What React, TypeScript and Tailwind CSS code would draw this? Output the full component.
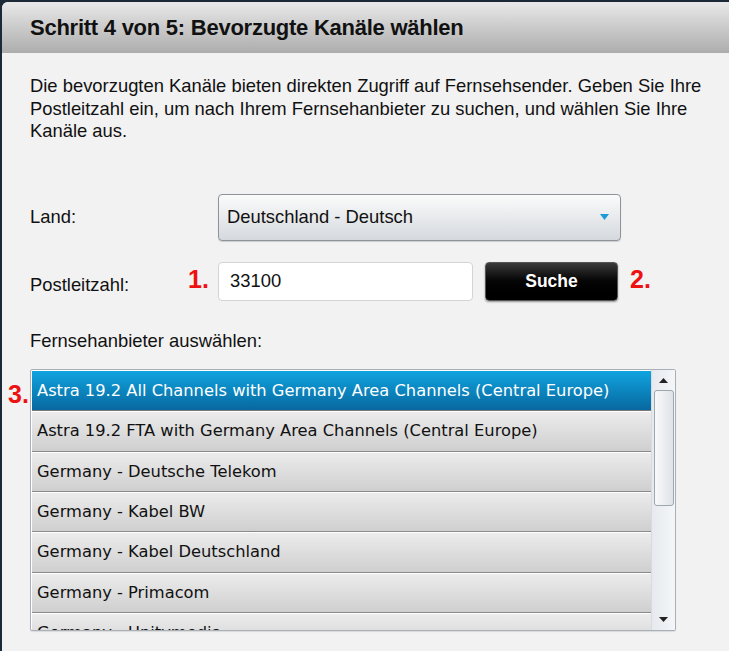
import React from "react";

const PROVIDERS = [
  "Astra 19.2 All Channels with Germany Area Channels (Central Europe)",
  "Astra 19.2 FTA with Germany Area Channels (Central Europe)",
  "Germany - Deutsche Telekom",
  "Germany - Kabel BW",
  "Germany - Kabel Deutschland",
  "Germany - Primacom",
  "Germany - Unitymedia",
];

function Marker({ children }: { children: React.ReactNode }) {
  return (
    <span className="font-bold text-[25px] leading-none text-[#ee1111] [font-family:'Liberation_Sans',Arial,sans-serif]">
      {children}
    </span>
  );
}

export default function App() {
  return (
    <div className="w-[729px] h-[651px] overflow-hidden bg-[#1c2a38] pt-[2px] pl-[2px] [font-family:'Liberation_Sans',Arial,sans-serif]">
      <div className="h-full rounded-tl-[6px] overflow-hidden bg-[#f2f2f2] flex flex-col">
        {/* Header */}
        <div className="h-[51px] shrink-0 flex items-center pl-[28px] bg-gradient-to-b from-[#e9e9e9] to-[#adadad]">
          <h1 className="text-[22px] font-bold text-[#111] tracking-[-0.25px]">
            Schritt 4 von 5: Bevorzugte Kanäle wählen
          </h1>
        </div>

        <div className="pl-[28px] pr-[14px]">
          <p className="mt-[22px] text-[18.4px] leading-[22.5px] text-[#111]">
            Die bevorzugten Kanäle bieten direkten Zugriff auf Fernsehsender. Geben Sie Ihre Postleitzahl ein, um nach
            Ihrem Fernsehanbieter zu suchen, und wählen Sie Ihre Kanäle aus.
          </p>

          {/* Land */}
          <div className="mt-[51px] flex items-center">
            <span className="w-[188px] text-[18.4px] text-[#111]">Land:</span>
            <div className="w-[403px] h-[47px] rounded-[4px] border border-[#8d939a] bg-gradient-to-b from-[#fbfbfb] to-[#d5d9de] shadow-[0_1px_1px_rgba(0,0,0,0.15)] flex items-center justify-between pl-[8px] pr-[11px]">
              <span className="text-[18.4px] text-[#111]">Deutschland - Deutsch</span>
              <svg width="9" height="6" viewBox="0 0 9 6">
                <path d="M0 0 L9 0 L4.5 6 Z" fill="#1b9ad6" />
              </svg>
            </div>
          </div>

          {/* Postleitzahl */}
          <div className="mt-[21px] flex items-center">
            <span className="w-[158px] text-[18.4px] text-[#111] pt-[8px]">Postleitzahl:</span>
            <span className="w-[30px]">
              <Marker>1.</Marker>
            </span>
            <div className="w-[255px] h-[39px] rounded-[4px] border border-[#d4d4d4] bg-white flex items-center pl-[11px]">
              <span className="text-[18.4px] text-[#111]">33100</span>
            </div>
            <button className="ml-[12px] w-[133px] h-[39px] rounded-[4px] border border-[#555] bg-gradient-to-b from-[#3a3a3a] via-[#050505] to-[#000] text-white font-bold text-[17.5px] shadow-[0_1px_2px_rgba(0,0,0,0.4)]">
              Suche
            </button>
            <span className="ml-[12px]">
              <Marker>2.</Marker>
            </span>
          </div>

          <div className="mt-[26px] text-[18.4px] text-[#111]">Fernsehanbieter auswählen:</div>

          {/* Provider list */}
          <div className="relative mt-[15px]">
            <div className="absolute -left-[22px] top-[13px]">
              <Marker>3.</Marker>
            </div>
            <div className="w-[646px] h-[262px] border border-[#a9b0b7] rounded-[2px] bg-white flex overflow-hidden shadow-[0_1px_1px_rgba(0,0,0,0.1)]">
              <div className="flex-1 overflow-hidden pt-[1px] pl-[1px] [font-family:'DejaVu_Sans',Verdana,sans-serif]">
                {PROVIDERS.map((p, i) => (
                  <div
                    key={p}
                    className={
                      i === 0
                        ? "h-[40.3px] flex items-center pl-[5px] text-[16.3px] whitespace-nowrap text-white bg-gradient-to-b from-[#10a4e0] to-[#08689f] border-b border-[#7a7a7a]"
                        : "h-[40.3px] flex items-center pl-[5px] text-[16.3px] whitespace-nowrap text-[#111] bg-gradient-to-b from-[#ececec] to-[#cfcfcf] border-t border-white border-b border-b-[#8a8a8a]"
                    }
                  >
                    {p}
                  </div>
                ))}
              </div>

              {/* Scrollbar */}
              <div className="w-[24px] border-l border-[#d6dbe0] bg-gradient-to-r from-[#e6eaee] to-[#f4f6f8] flex flex-col items-center">
                <svg className="mt-[8px]" width="9" height="5" viewBox="0 0 9 5">
                  <path d="M0 5 L9 5 L4.5 0 Z" fill="#222" />
                </svg>
                <div className="mt-[7px] w-[20px] h-[116px] rounded-[3px] border border-[#9ea6ae] bg-gradient-to-r from-[#f8f9fa] to-[#dfe3e7]" />
                <div className="flex-1" />
                <svg className="mb-[8px]" width="9" height="5" viewBox="0 0 9 5">
                  <path d="M0 0 L9 0 L4.5 5 Z" fill="#222" />
                </svg>
              </div>
            </div>
          </div>
        </div>
      </div>
    </div>
  );
}
